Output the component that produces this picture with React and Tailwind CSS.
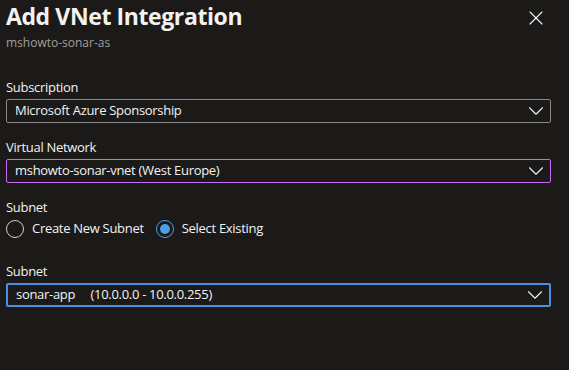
import React from 'react'
import { X, ChevronDown } from 'lucide-react'

const Dropdown = ({ border, children }) => (
  <div className={`h-6 flex items-center justify-between pl-[8px] pr-[1px] rounded-[2px] ${border}`}>
    <span className="text-[13px] tracking-[-0.3px] text-[#f3f2f1] whitespace-pre">{children}</span>
    <ChevronDown className="w-[26px] h-[26px] text-[#f3f2f1]" strokeWidth={1} />
  </div>
)

const Radio = ({ checked, label }) => (
  <label className="flex items-center gap-[8px]">
    <span
      className={`w-[18px] h-[18px] rounded-full border flex items-center justify-center ${
        checked ? 'border-[#4f9fe8]' : 'border-[#d2d0ce]'
      }`}
    >
      {checked && <span className="w-[10px] h-[10px] rounded-full bg-[#4f9fe8]" />}
    </span>
    <span className="text-[13px] tracking-[-0.3px] text-[#f3f2f1]">{label}</span>
  </label>
)

export default function App() {
  return (
    <div
      className="w-[569px] h-[370px] bg-[#1b1a19] text-[#f3f2f1] pl-[6px] pr-[18px] overflow-hidden"
      style={{ fontFamily: '"Open Sans", "Noto Sans", sans-serif' }}
    >
      {/* Header */}
      <div className="flex items-start justify-between">
        <div>
          <h1 className="text-[23px] font-bold leading-[32px] tracking-[-0.4px]">Add VNet Integration</h1>
          <p className="mt-[3px] text-[12px] text-[#a19f9d] leading-4">mshowto-sonar-as</p>
        </div>
        <button className="mt-[6px] mr-[3px] text-[#f3f2f1]">
          <X className="w-6 h-6" strokeWidth={1.1} />
        </button>
      </div>

      {/* Form */}
      <div className="mt-[27px] space-y-[15px] w-[545px]">
        <div>
          <div className="text-[13px] tracking-[-0.3px] leading-[19px] mb-[2px]">Subscription</div>
          <Dropdown border="border border-[#8a8886]">Microsoft Azure Sponsorship</Dropdown>
        </div>

        <div>
          <div className="text-[13px] tracking-[-0.3px] leading-[19px] mb-[2px]">Virtual Network</div>
          <Dropdown border="border border-[#c86df0]">mshowto-sonar-vnet (West Europe)</Dropdown>
        </div>

        <div>
          <div className="text-[13px] tracking-[-0.3px] leading-[19px]">Subnet</div>
          <div className="flex items-center gap-[12px] mt-[2px]">
            <Radio label="Create New Subnet" />
            <Radio checked label="Select Existing" />
          </div>
        </div>

        <div className="pt-[8px]">
          <div className="text-[13px] tracking-[-0.3px] leading-[19px] mb-[2px]">Subnet</div>
          <Dropdown border="border-2 border-[#4a90e2]">{'sonar-app     (10.0.0.0 - 10.0.0.255)'}</Dropdown>
        </div>
      </div>
    </div>
  )
}
